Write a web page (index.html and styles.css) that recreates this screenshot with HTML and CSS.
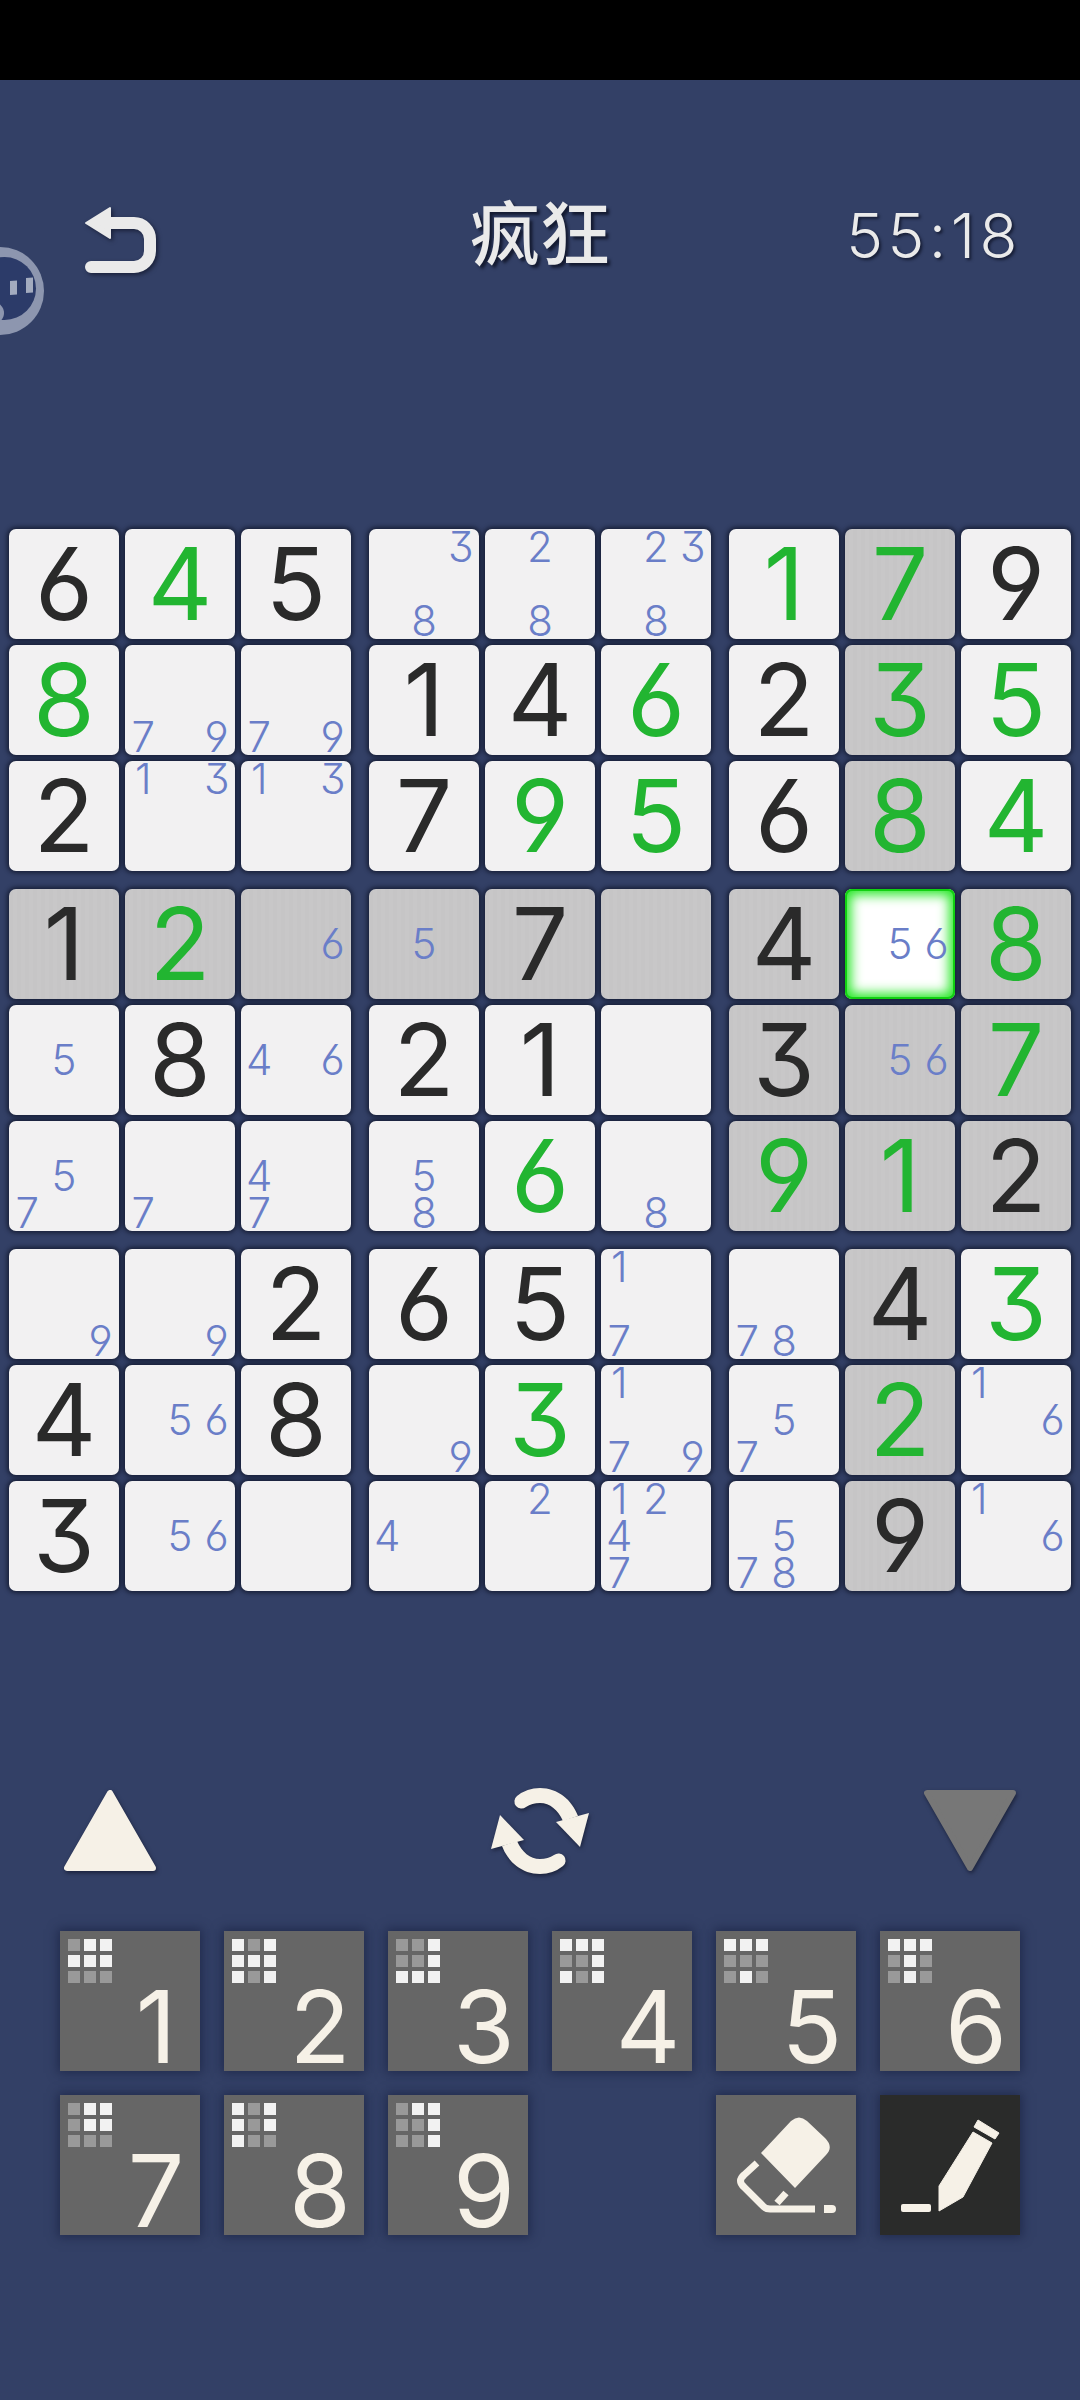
FILE: index.html
```html
<!DOCTYPE html>
<html lang="zh">
<head>
    <meta charset="UTF-8">
    <meta name="viewport" content="width=device-width, initial-scale=1.0">
    <title>疯狂</title>
    <link rel="stylesheet" href="styles.css">
</head>
<body>

    <div class="status-bar"></div>

    <div class="float-ball">
        <svg width="48" height="90" viewBox="0 0 48 90">
            <circle cx="0" cy="45" r="44" fill="#8d96af"/>
            <circle cx="4.5" cy="42.5" r="31.5" fill="#2c3b69"/>
            <circle cx="-7" cy="67" r="11" fill="#8d96af"/>
            <path d="M10 35 L17 34.5 L17 48.5 L10 49 Z M26 32 L33 31.5 L33 46.5 L26 47 Z" fill="#a3abbf"/>
        </svg>
    </div>

    <header class="header">
        <button class="back">
            <svg width="80" height="80" viewBox="0 0 80 80">
                <path d="M6 23 L30 8 L30 38 Z" fill="#eaeaea" stroke="#eaeaea" stroke-width="2" stroke-linejoin="round"/>
                <path d="M26 23 H54 a16 16 0 0 1 16 16 V51 a16 16 0 0 1 -16 16 H11" fill="none" stroke="#eaeaea" stroke-width="12" stroke-linecap="round"/>
            </svg>
        </button>
        <h1 class="title">疯狂</h1>
        <div class="timer">55:18</div>
    </header>

    <main class="board">
        <div class="box">
            <div class="cell given">6</div>
            <div class="cell solved">4</div>
            <div class="cell given">5</div>
            <div class="cell solved">8</div>
            <div class="cell notes"><span class="n7">7</span><span class="n9">9</span></div>
            <div class="cell notes"><span class="n7">7</span><span class="n9">9</span></div>
            <div class="cell given">2</div>
            <div class="cell notes"><span class="n1">1</span><span class="n3">3</span></div>
            <div class="cell notes"><span class="n1">1</span><span class="n3">3</span></div>
        </div>
        <div class="box">
            <div class="cell notes"><span class="n3">3</span><span class="n8">8</span></div>
            <div class="cell notes"><span class="n2">2</span><span class="n8">8</span></div>
            <div class="cell notes"><span class="n2">2</span><span class="n3">3</span><span class="n8">8</span></div>
            <div class="cell given">1</div>
            <div class="cell given">4</div>
            <div class="cell solved">6</div>
            <div class="cell given">7</div>
            <div class="cell solved">9</div>
            <div class="cell solved">5</div>
        </div>
        <div class="box">
            <div class="cell solved">1</div>
            <div class="cell solved shaded">7</div>
            <div class="cell given">9</div>
            <div class="cell given">2</div>
            <div class="cell solved shaded">3</div>
            <div class="cell solved">5</div>
            <div class="cell given">6</div>
            <div class="cell solved shaded">8</div>
            <div class="cell solved">4</div>
        </div>

        <div class="box">
            <div class="cell given shaded">1</div>
            <div class="cell solved shaded">2</div>
            <div class="cell notes shaded"><span class="n6">6</span></div>
            <div class="cell notes"><span class="n5">5</span></div>
            <div class="cell given">8</div>
            <div class="cell notes"><span class="n4">4</span><span class="n6">6</span></div>
            <div class="cell notes"><span class="n5">5</span><span class="n7">7</span></div>
            <div class="cell notes"><span class="n7">7</span></div>
            <div class="cell notes"><span class="n4">4</span><span class="n7">7</span></div>
        </div>
        <div class="box">
            <div class="cell notes shaded"><span class="n5">5</span></div>
            <div class="cell given shaded">7</div>
            <div class="cell notes shaded"></div>
            <div class="cell given">2</div>
            <div class="cell given">1</div>
            <div class="cell notes"></div>
            <div class="cell notes"><span class="n5">5</span><span class="n8">8</span></div>
            <div class="cell solved">6</div>
            <div class="cell notes"><span class="n8">8</span></div>
        </div>
        <div class="box">
            <div class="cell given shaded">4</div>
            <div class="cell notes selected"><span class="n5">5</span><span class="n6">6</span></div>
            <div class="cell solved shaded">8</div>
            <div class="cell given shaded">3</div>
            <div class="cell notes shaded"><span class="n5">5</span><span class="n6">6</span></div>
            <div class="cell solved shaded">7</div>
            <div class="cell solved shaded">9</div>
            <div class="cell solved shaded">1</div>
            <div class="cell given shaded">2</div>
        </div>

        <div class="box">
            <div class="cell notes"><span class="n9">9</span></div>
            <div class="cell notes"><span class="n9">9</span></div>
            <div class="cell given">2</div>
            <div class="cell given">4</div>
            <div class="cell notes"><span class="n5">5</span><span class="n6">6</span></div>
            <div class="cell given">8</div>
            <div class="cell given">3</div>
            <div class="cell notes"><span class="n5">5</span><span class="n6">6</span></div>
            <div class="cell notes"></div>
        </div>
        <div class="box">
            <div class="cell given">6</div>
            <div class="cell given">5</div>
            <div class="cell notes"><span class="n1">1</span><span class="n7">7</span></div>
            <div class="cell notes"><span class="n9">9</span></div>
            <div class="cell solved">3</div>
            <div class="cell notes"><span class="n1">1</span><span class="n7">7</span><span class="n9">9</span></div>
            <div class="cell notes"><span class="n4">4</span></div>
            <div class="cell notes"><span class="n2">2</span></div>
            <div class="cell notes"><span class="n1">1</span><span class="n2">2</span><span class="n4">4</span><span class="n7">7</span></div>
        </div>
        <div class="box">
            <div class="cell notes"><span class="n7">7</span><span class="n8">8</span></div>
            <div class="cell given shaded">4</div>
            <div class="cell solved">3</div>
            <div class="cell notes"><span class="n5">5</span><span class="n7">7</span></div>
            <div class="cell solved shaded">2</div>
            <div class="cell notes"><span class="n1">1</span><span class="n6">6</span></div>
            <div class="cell notes"><span class="n5">5</span><span class="n7">7</span><span class="n8">8</span></div>
            <div class="cell given shaded">9</div>
            <div class="cell notes"><span class="n1">1</span><span class="n6">6</span></div>
        </div>
    </main>

    <div class="controls">
        <svg width="100" height="90" viewBox="0 0 100 90">
            <polygon points="50,8 7,83 93,83" fill="#f6f1e7" stroke="#f6f1e7" stroke-width="6" stroke-linejoin="round"/>
        </svg>
        <svg width="120" height="120" viewBox="0 0 120 120">
            <g fill="#f6f1e7">
                <path d="M37 26 Q47 18 60 18 C78 18 92 30 98 46 L83 51 C78 40 70 33 60 33 Q52 33 46 37 A7 7 0 0 1 37 26 Z"/>
                <polygon points="76,52 109,43 100,77"/>
            </g>
            <g fill="#f6f1e7" transform="rotate(180 60 61)">
                <path d="M37 26 Q47 18 60 18 C78 18 92 30 98 46 L83 51 C78 40 70 33 60 33 Q52 33 46 37 A7 7 0 0 1 37 26 Z"/>
                <polygon points="76,52 109,43 100,77"/>
            </g>
        </svg>
        <svg width="100" height="90" viewBox="0 0 100 90">
            <polygon points="7,8 93,8 50,83" fill="#777" stroke="#777" stroke-width="6" stroke-linejoin="round"/>
        </svg>
    </div>

    <div class="keypad">
        <button class="key"><div class="mini"><i class="off"></i><i></i><i></i><i></i><i></i><i></i><i class="off"></i><i class="off"></i><i class="off"></i></div><span class="num">1</span></button>
        <button class="key"><div class="mini"><i></i><i class="off"></i><i></i><i></i><i></i><i></i><i></i><i class="off"></i><i></i></div><span class="num">2</span></button>
        <button class="key"><div class="mini"><i class="off"></i><i class="off"></i><i></i><i class="off"></i><i class="off"></i><i></i><i></i><i></i><i></i></div><span class="num">3</span></button>
        <button class="key"><div class="mini"><i></i><i></i><i></i><i class="off"></i><i class="off"></i><i></i><i></i><i class="off"></i><i></i></div><span class="num">4</span></button>
        <button class="key"><div class="mini"><i></i><i></i><i></i><i class="off"></i><i class="off"></i><i class="off"></i><i class="off"></i><i></i><i class="off"></i></div><span class="num">5</span></button>
        <button class="key"><div class="mini"><i></i><i></i><i></i><i class="off"></i><i></i><i class="off"></i><i class="off"></i><i></i><i class="off"></i></div><span class="num">6</span></button>
        <button class="key"><div class="mini"><i class="off"></i><i></i><i></i><i class="off"></i><i></i><i></i><i class="off"></i><i class="off"></i><i class="off"></i></div><span class="num">7</span></button>
        <button class="key"><div class="mini"><i></i><i class="off"></i><i></i><i></i><i class="off"></i><i></i><i></i><i class="off"></i><i class="off"></i></div><span class="num">8</span></button>
        <button class="key"><div class="mini"><i class="off"></i><i></i><i></i><i class="off"></i><i class="off"></i><i></i><i class="off"></i><i class="off"></i><i></i></div><span class="num">9</span></button>
        <button class="key tool eraser">
            <svg width="140" height="140" viewBox="0 0 140 140">
                <path d="M75 26 Q83 19 91 26 L109 43 Q118 52 110 60 L79 93 L45 58 Z" fill="#f6f1e7"/>
                <path d="M41 68 L28 80 Q21 86 28 92 L46 110 Q49 114 54 114 H99 M61 108 L70 98" fill="none" stroke="#f6f1e7" stroke-width="7"/>
                <path d="M108 110 H116 a4 4 0 0 1 0 8 H108 Z" fill="#f6f1e7"/>
            </svg>
        </button>
        <button class="key tool pencil">
            <svg width="140" height="140" viewBox="0 0 140 140">
                <path d="M93 37 L112 48 L83 102 L59 116 L59 91 Z" fill="#f6f1e7" stroke="#f6f1e7" stroke-width="1" stroke-linejoin="round"/>
                <path d="M98 25 L119 38 L115 44 L94 32 Z" fill="#f6f1e7" stroke="#f6f1e7" stroke-width="1" stroke-linejoin="round"/>
                <rect x="21" y="109" width="30" height="8" rx="2" fill="#f6f1e7"/>
            </svg>
        </button>
    </div>

</body>
</html>
```
FILE: styles.css
```css
* {
    box-sizing: border-box;
}
body {
    margin: 0;
    width: 1080px;
    height: 2400px;
    background: #334066;
    font-family: Inter, "Noto Sans", sans-serif;
    font-feature-settings: "cv03", "cv04", "cv09";
    overflow: hidden;
    position: relative;
}
button {
    border: none;
    padding: 0;
    background: none;
    font-family: inherit;
}
.status-bar {
    height: 80px;
    background: #000;
}
.float-ball {
    position: absolute;
    left: 0;
    top: 246px;
    line-height: 0;
}
.header {
    height: 449px;
    padding-top: 120px;
    display: grid;
    grid-template-columns: 1fr auto 1fr;
    align-items: start;
}
.back {
    margin-left: 80px;
    width: 80px;
    height: 80px;
    line-height: 0;
    justify-self: start;
    filter: drop-shadow(2px 2px 2px rgba(15, 20, 40, 0.7));
}
.title {
    margin: -5px 0 0;
    font-family: "Noto Sans CJK SC", sans-serif;
    font-size: 70px;
    font-weight: 500;
    line-height: 70px;
    color: #eaeaea;
    text-shadow: 3px 3px 3px rgba(15, 20, 40, 0.85);
}
.timer {
    justify-self: end;
    margin: 1px 58px 0 0;
    font-size: 62px;
    font-weight: 300;
    line-height: 70px;
    letter-spacing: 4.5px;
    color: #eaeaea;
    text-shadow: 2px 2px 3px rgba(15, 20, 40, 0.8);
}
.board {
    margin-left: 9px;
    display: grid;
    grid-template-columns: repeat(3, 342px);
    gap: 18px;
}
.box {
    display: grid;
    grid-template-columns: repeat(3, 110px);
    grid-auto-rows: 110px;
    gap: 6px;
}
.cell {
    display: flex;
    align-items: center;
    justify-content: center;
    background: #f2f1f2;
    border-radius: 7px;
    box-shadow: 0 0 4px 2px rgba(15, 20, 40, 0.75);
    font-size: 100px;
    line-height: 110px;
    font-weight: 400;
}
.given {
    color: #2a2a2a;
}
.solved {
    color: #22b531;
}
.shaded {
    background: repeating-linear-gradient(90deg, #c6c5c6 0 4px, #c8c7c8 4px 8px);
}
.notes {
    display: grid;
    grid-template-columns: repeat(3, 1fr);
    grid-template-rows: repeat(3, 1fr);
    font-size: 42px;
    line-height: 36px;
    font-weight: 350;
    color: #6a7ec8;
    text-align: center;
}
.selected {
    background: #fff;
    box-shadow: inset 0 0 0 2px #12d012, inset 0 0 12px 6px #2ae82a, 0 0 4px 2px rgba(15, 20, 40, 0.75);
}
.n1 { grid-area: 1 / 1; }
.n2 { grid-area: 1 / 2; }
.n3 { grid-area: 1 / 3; }
.n4 { grid-area: 2 / 1; }
.n5 { grid-area: 2 / 2; }
.n6 { grid-area: 2 / 3; }
.n7 { grid-area: 3 / 1; }
.n8 { grid-area: 3 / 2; }
.n9 { grid-area: 3 / 3; }
.controls {
    margin-top: 179px;
    height: 120px;
    padding: 0 60px;
    display: flex;
    align-items: center;
    justify-content: space-between;
}
.controls svg {
    filter: drop-shadow(1px 2px 2px rgba(15, 20, 40, 0.7));
}
.keypad {
    margin-top: 41px;
    padding-left: 60px;
    display: grid;
    grid-template-columns: repeat(6, 140px);
    grid-auto-rows: 140px;
    gap: 24px;
}
.key {
    display: flex;
    flex-direction: column;
    padding: 8px;
    background: #666;
    box-shadow: 0 0 10px 2px rgba(20, 28, 60, 0.6);
}
.mini {
    display: grid;
    grid-template-columns: repeat(3, 12px);
    grid-auto-rows: 12px;
    gap: 4px;
}
.mini i {
    background: #f2f2f2;
}
.mini i.off {
    background: #999;
}
.num {
    align-self: flex-end;
    width: 72px;
    margin-top: 7px;
    font-size: 100px;
    font-weight: 400;
    line-height: 73px;
    text-align: center;
    color: #f6f1e7;
}
.tool {
    padding: 0;
    line-height: 0;
}
.eraser {
    grid-column: 5;
}
.pencil {
    background: #2a2b2a;
}
```
